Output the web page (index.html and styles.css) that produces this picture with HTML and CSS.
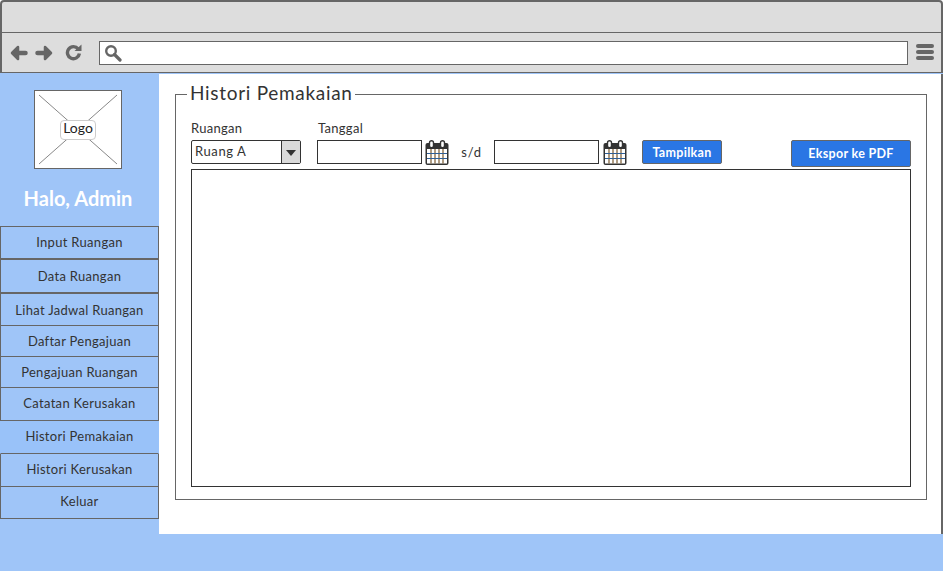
FILE: index.html
```html
<!DOCTYPE html>
<html lang="en">
<head>
    <meta charset="UTF-8">
    <title>Histori Pemakaian</title>
    <link rel="stylesheet" href="styles.css">
</head>
<body>
<div class="browser">
    <div class="tab-bar"></div>
    <div class="tool-bar">
        <svg class="nav-icon" width="18" height="16" viewBox="0 0 18 16"><path d="M8 2 L2 8 L8 14 Z" fill="#666" stroke="#666" stroke-width="2.500" stroke-linejoin="round"/><path d="M6 8 H15.500" stroke="#666" stroke-width="4.500" stroke-linecap="round"/></svg>
        <svg class="nav-icon" width="18" height="16" viewBox="0 0 18 16"><path d="M10 2 L16 8 L10 14 Z" fill="#666" stroke="#666" stroke-width="2.500" stroke-linejoin="round"/><path d="M12 8 H2.500" stroke="#666" stroke-width="4.500" stroke-linecap="round"/></svg>
        <svg class="reload-icon" width="17" height="17" viewBox="0 0 17 17"><path d="M13.200 5 A6 6 0 1 0 14.400 9.500" fill="none" stroke="#666" stroke-width="3.400"/><path d="M9.500 7 H16.500 V0.500 Z" fill="#666"/></svg>
        <div class="url-box">
            <svg width="18" height="18" viewBox="0 0 18 18"><circle cx="7" cy="7" r="4.800" fill="none" stroke="#666" stroke-width="2.400"/><path d="M10.500 10.500 L16 16" stroke="#666" stroke-width="3.200" stroke-linecap="round"/></svg>
        </div>
        <div class="burger"><span></span><span></span><span></span></div>
    </div>
    <div class="page">
        <aside class="sidebar">
            <div class="logo">
                <svg width="86" height="77" viewBox="0 0 86 77"><path d="M4 4 L82 73 M82 4 L4 73" stroke="#888" stroke-width="1"/></svg>
                <span class="logo-label">Logo</span>
            </div>
            <div class="greeting">Halo, Admin</div>
            <nav class="menu">
                <a class="h34 thick">Input Ruangan</a>
                <a class="h34 thick low">Data Ruangan</a>
                <a class="h32 low">Lihat Jadwal Ruangan</a>
                <a class="h31">Daftar Pengajuan</a>
                <a class="h31">Pengajuan Ruangan</a>
                <a class="h33">Catatan Kerusakan</a>
                <a class="h33 active">Histori Pemakaian</a>
                <a class="h33">Histori Kerusakan</a>
                <a class="h32 high">Keluar</a>
            </nav>
        </aside>
        <main class="content">
            <fieldset class="panel">
                <legend>Histori Pemakaian</legend>
                <div class="filters">
                    <div class="field room-field">
                        <label>Ruangan</label>
                        <div class="select">
                            <span class="select-value">Ruang A</span>
                            <span class="select-arrow"></span>
                        </div>
                    </div>
                    <div class="field">
                        <label class="date-label">Tanggal</label>
                        <div class="date-row">
                            <div class="input"></div>
                            <svg class="cal" width="24" height="25" viewBox="0 0 24 25"><use href="#calendar"/></svg>
                            <span class="until">s/d</span>
                            <div class="input"></div>
                            <svg class="cal cal-end" width="24" height="25" viewBox="0 0 24 25"><use href="#calendar"/></svg>
                            <button class="btn btn-show" type="button">Tampilkan</button>
                        </div>
                    </div>
                    <button class="btn btn-export" type="button">Ekspor ke PDF</button>
                </div>
                <div class="results"></div>
            </fieldset>
        </main>
    </div>
    <div class="footer"></div>
</div>

<svg width="0" height="0" class="defs">
    <symbol id="calendar" viewBox="0 0 24 25">
        <rect x="0.500" y="3" width="23" height="22" rx="2" fill="#333"/>
        <rect x="2" y="9" width="20" height="14.500" fill="#fff"/>
        <path d="M6 9 V23.500 M10 9 V23.500 M14 9 V23.500 M18 9 V23.500" stroke="#7a5a30" stroke-width="1.200"/>
        <path d="M2 13.500 H22 M2 18.500 H22" stroke="#2f5f96" stroke-width="1.200"/>
        <rect x="4.500" y="0.700" width="4" height="7" rx="2" fill="#fff" stroke="#333" stroke-width="1.400"/>
        <rect x="15.500" y="0.700" width="4" height="7" rx="2" fill="#fff" stroke="#333" stroke-width="1.400"/>
    </symbol>
</svg>
</body>
</html>
```

FILE: styles.css
```css
* {
    box-sizing: border-box;
}

html, body {
    margin: 0;
    padding: 0;
}

body {
    font-family: "Lato", "Noto Sans", sans-serif;
    color: #333;
    background: #fff;
}

.defs {
    display: block;
    height: 0;
}

.browser {
    width: 943px;
    height: 571px;
    display: flex;
    flex-direction: column;
    overflow: hidden;
}

.tab-bar {
    height: 33px;
    background: #ddd;
    border: 2px solid #666;
    border-bottom: 1px solid #666;
    border-radius: 4px 4px 0 0;
}

.tool-bar {
    height: 40px;
    display: flex;
    align-items: center;
    padding-left: 8px;
    background: #ddd;
    border-left: 2px solid #666;
    border-right: 2px solid #666;
    border-bottom: 1px solid #666;
}

.nav-icon {
    margin-right: 7px;
}

.reload-icon {
    margin-left: 5px;
}

.url-box {
    width: 809px;
    height: 24px;
    margin-left: 17px;
    padding: 2px 0 0 4px;
    background: #fff;
    border: 1px solid #666;
}

.burger {
    width: 18px;
    margin-left: 8px;
}

.burger span {
    display: block;
    height: 4px;
    margin-bottom: 2px;
    background: #666;
    border-radius: 2px;
}

.page {
    flex: 1;
    display: flex;
    background: #9fc5f8;
    padding-top: 1px;
}

.sidebar {
    width: 159px;
    padding-top: 16px;
    background: #9fc5f8;
}

.logo {
    position: relative;
    width: 88px;
    height: 79px;
    margin-left: 34px;
    background: #fff;
    border: 1px solid #666;
}

.logo svg {
    display: block;
}

.logo-label {
    position: absolute;
    left: 25px;
    top: 29px;
    width: 36px;
    height: 20px;
    line-height: 14px;
    text-align: center;
    font-size: 14px;
    color: #222;
    background: #fff;
    border: 1px solid #ccc;
    border-radius: 4px;
}

.greeting {
    height: 57px;
    line-height: 59px;
    padding-right: 3px;
    text-align: center;
    color: #fff;
    font-size: 20px;
    font-weight: 700;
}

.menu a {
    display: flex;
    align-items: center;
    justify-content: center;
    padding-bottom: 2px;
    font-size: 13px;
    letter-spacing: 0.3px;
    background: #9fc5f8;
    border: 1px solid #666;
    border-top: 0;
}

.menu a:first-child {
    border-top: 1px solid #666;
}

.menu .h34 { height: 34px; }
.menu .h33 { height: 33px; }
.menu .h32 { height: 32px; }
.menu .h31 { height: 31px; padding-bottom: 1px; }

.menu .low {
    padding-bottom: 0;
}

.menu .high {
    padding-bottom: 4px;
}

.menu .thick {
    border-bottom-width: 2px;
}

.menu .active {
    background: #99c2f9;
    border-left-color: #99c2f9;
    border-right-color: #99c2f9;
}

.content {
    width: 784px;
    height: 460px;
    padding: 8px 14px 0 16px;
    background: #fff;
    border-right: 2px solid #666;
}

.panel {
    height: 418px;
    margin: 0;
    padding: 0 15px 12px 15px;
    border: 1px solid #666;
    display: flex;
    flex-direction: column;
    min-width: 0;
}

.panel legend {
    margin-left: -4px;
    padding: 0 2px 0 3px;
    height: 24px;
    line-height: 22px;
    font-size: 19px;
    letter-spacing: 0.7px;
    color: #333;
}

.filters {
    height: 47px;
    margin-top: 16px;
    display: flex;
    align-items: flex-start;
    flex: none;
}

.field label {
    display: block;
    height: 18px;
    line-height: 12px;
    font-size: 13px;
    letter-spacing: 0.3px;
}

.room-field {
    width: 126px;
}

.select {
    width: 110px;
    height: 24px;
    display: flex;
    border: 1px solid #333;
    border-radius: 2px;
}

.select-value {
    flex: 1;
    padding-left: 3px;
    line-height: 21px;
    font-size: 13px;
    letter-spacing: 0.6px;
    border-right: 1px solid #333;
}

.select-arrow {
    width: 18px;
    background: #d9d9d9;
    position: relative;
}

.select-arrow::after {
    content: "";
    position: absolute;
    left: 4px;
    top: 9px;
    border-left: 5px solid transparent;
    border-right: 5px solid transparent;
    border-top: 6px solid #333;
}

.date-label {
    padding-left: 1px;
}

.date-row {
    display: flex;
    align-items: flex-start;
}

.input {
    width: 105px;
    height: 24px;
    background: #fff;
    border: 1px solid #333;
}

.cal {
    margin-left: 3px;
    flex: none;
}

.cal-end {
    margin-left: 4px;
}

.until {
    width: 45px;
    text-align: center;
    font-size: 13px;
    line-height: 24px;
    letter-spacing: 0.7px;
}

.btn {
    color: #fff;
    background: #2a76e4;
    border: 1px solid #666;
    border-radius: 2px;
    font-family: inherit;
    font-weight: 700;
    font-size: 12.500px;
    letter-spacing: 0.3px;
    padding: 0;
}

.btn-show {
    width: 80px;
    height: 24px;
    margin-left: 15px;
}

.btn-export {
    width: 120px;
    height: 27px;
    margin-top: 18px;
    margin-left: auto;
}

.results {
    height: 318px;
    flex: none;
    background: #fff;
    border: 1px solid #333;
}
```
